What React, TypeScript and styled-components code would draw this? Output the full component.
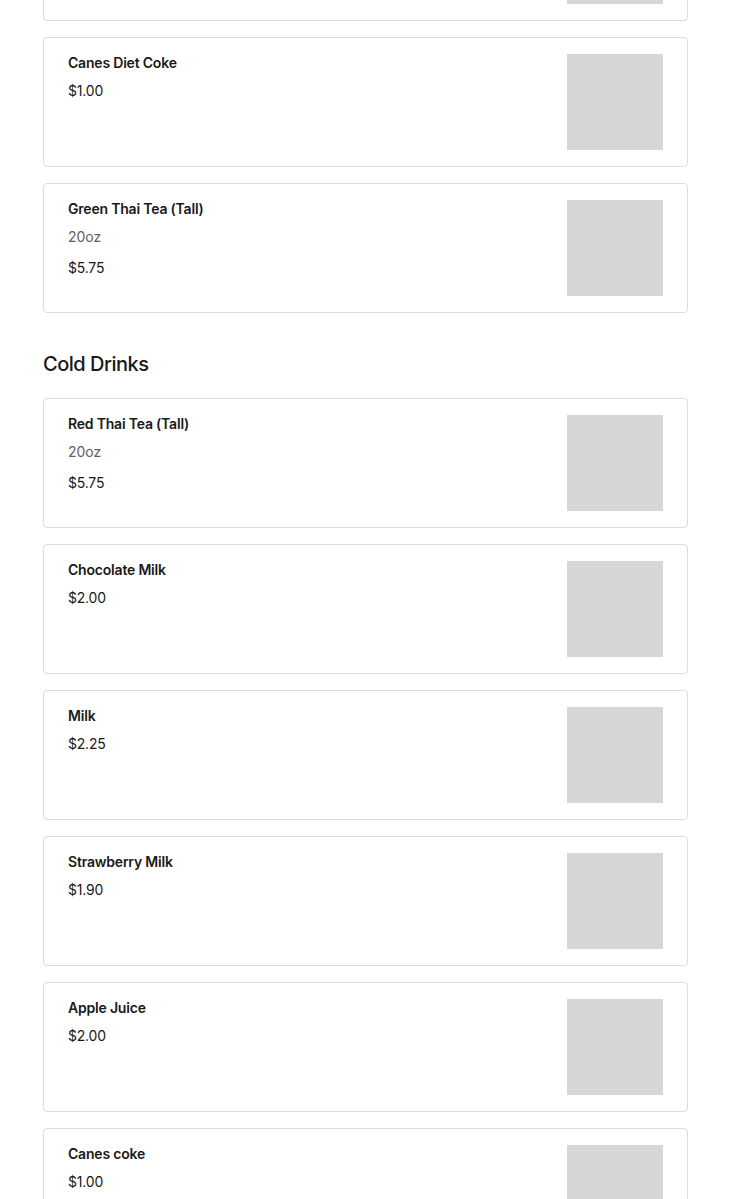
import styled, { createGlobalStyle } from 'styled-components';

const GlobalStyle = createGlobalStyle`
  body {
    margin: 0;
    background: #ffffff;
    font-family: Inter, "Liberation Sans", sans-serif;
    color: #191919;
  }
`;

const Page = styled.div`
  padding: 0 42px 0 43px;
  margin-top: -109px;
  display: flex;
  flex-direction: column;
`;

const Section = styled.section`
  display: flex;
  flex-direction: column;
  gap: 16px;
`;

const SectionTitle = styled.h2`
  margin: 37px 0 20px;
  font-size: 20px;
  line-height: 28px;
  font-weight: 500;
  letter-spacing: -0.5px;
  color: #191919;
`;

const Card = styled.div`
  display: flex;
  justify-content: space-between;
  height: 130px;
  box-sizing: border-box;
  padding: 16px 24px;
  border: 1px solid #dcdcdc;
  border-radius: 4px;
  background: #fff;
`;

const Info = styled.div`
  display: flex;
  flex-direction: column;
  gap: 8px;
  margin-top: -1px;
`;

const Name = styled.div`
  font-size: 14px;
  line-height: 20px;
  font-weight: 600;
  letter-spacing: -0.2px;
  color: #191919;
`;

const Description = styled.div`
  font-size: 14px;
  line-height: 20px;
  color: #606060;
  margin-bottom: 3px;
`;

const Price = styled.div`
  font-size: 14px;
  line-height: 20px;
  letter-spacing: -0.2px;
  color: #191919;
`;

const Thumb = styled.div`
  width: 96px;
  height: 96px;
  flex-shrink: 0;
  background: #d6d6d6;
`;

type Item = { name?: string; price?: string; description?: string };

const topItems: Item[] = [
  {},
  { name: 'Canes Diet Coke', price: '$1.00' },
  { name: 'Green Thai Tea (Tall)', description: '20oz', price: '$5.75' },
];

const coldDrinks: Item[] = [
  { name: 'Red Thai Tea (Tall)', description: '20oz', price: '$5.75' },
  { name: 'Chocolate Milk', price: '$2.00' },
  { name: 'Milk', price: '$2.25' },
  { name: 'Strawberry Milk', price: '$1.90' },
  { name: 'Apple Juice', price: '$2.00' },
  { name: 'Canes coke', price: '$1.00' },
];

function MenuCard({ item }: { item: Item }): JSX.Element {
  return (
    <Card>
      <Info>
        {item.name && <Name>{item.name}</Name>}
        {item.description && <Description>{item.description}</Description>}
        {item.price && <Price>{item.price}</Price>}
      </Info>
      <Thumb />
    </Card>
  );
}

function App(): JSX.Element {
  return (
    <>
      <GlobalStyle />
      <Page>
        <Section>
          {topItems.map((item, i) => (
            <MenuCard key={item.name ?? i} item={item} />
          ))}
        </Section>
        <SectionTitle>Cold Drinks</SectionTitle>
        <Section>
          {coldDrinks.map((item) => (
            <MenuCard key={item.name} item={item} />
          ))}
        </Section>
      </Page>
    </>
  );
}

export default App;
